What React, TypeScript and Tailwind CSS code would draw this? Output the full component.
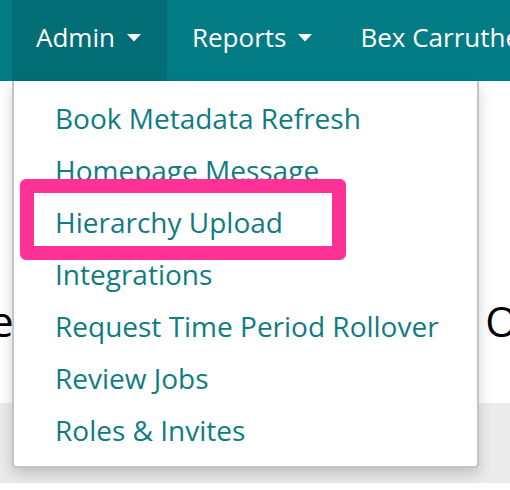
import React from "react";

const adminLinks = [
  "Book Metadata Refresh",
  "Homepage Message",
  "Hierarchy Upload",
  "Integrations",
  "Request Time Period Rollover",
  "Review Jobs",
  "Roles & Invites",
];

function Caret() {
  return (
    <svg width="14" height="8" viewBox="0 0 14 8" className="ml-3 mt-[2px]">
      <path d="M0 0 L14 0 L7 7.5 Z" fill="#ffffff" />
    </svg>
  );
}

export default function App() {
  return (
    <div className="relative w-[510px] h-[490px] overflow-hidden bg-white" style={{ fontFamily: '"Open Sans", sans-serif' }}>
      {/* top nav */}
      <nav className="flex h-[81px] bg-[#047c85] pl-[12px] text-[26px] text-white">
        <div className="relative flex items-center bg-[#036e76] pb-[7px] pl-[24px] pr-[26px]">
          <span>Admin</span>
          <Caret />
        </div>
        <div className="flex items-center pb-[7px] pl-[25px] pr-[24px]">
          <span>Reports</span>
          <Caret />
        </div>
        <div className="flex items-center whitespace-nowrap pb-[7px] pl-[24px]">Bex Carruthers</div>
      </nav>

      {/* page behind the menu */}
      <div className="mt-[219px] flex justify-between text-[42px] leading-none text-black">
        <span className="ml-[-10px]">e</span>
        <span className="mr-[-8px]">O</span>
      </div>
      <div className="mt-[61px] h-[80px] bg-[#ebebeb]" />

      {/* dropdown */}
      <div className="absolute left-[12px] top-[81px] w-[467px] rounded-b-[4px] border-x-2 border-b-2 border-[#c4c4c4] bg-white pt-[11px] pb-[10px] shadow-[0_6px_14px_rgba(0,0,0,0.18)]">
        {adminLinks.map((l) => (
          <div key={l} className="pl-[41px] text-[28px] leading-[52px] text-[#0f7b83]">
            {l}
          </div>
        ))}
      </div>

      {/* highlight annotation */}
      <div className="absolute left-[20px] top-[179px] h-[81px] w-[326px] rounded-[6px] border-[14px] border-[#fd3196]" />
    </div>
  );
}
